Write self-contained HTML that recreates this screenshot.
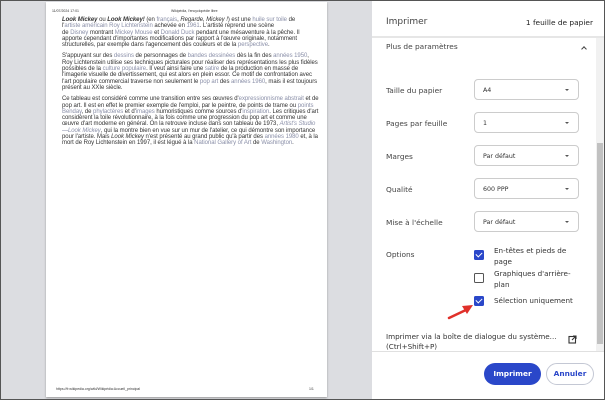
<!DOCTYPE html>
<html><head><meta charset="utf-8"><style>
*{margin:0;padding:0;box-sizing:border-box}
body{width:605px;height:400px;overflow:hidden;font-family:"Liberation Sans",sans-serif;position:relative;background:#fff}
.frame{position:absolute;inset:0;border:1px solid #555;pointer-events:none;z-index:9}
.left{position:absolute;left:0;top:0;width:372px;height:400px;background:#dcdde1}
.page{position:absolute;left:46px;top:2px;width:281px;height:395px;background:#fff;box-shadow:0 1px 2px #999;overflow:hidden}
.hd{position:absolute;top:7px;font-size:3.5px;color:#333}
.txt{position:absolute;left:16px;top:15px;white-space:nowrap;font-size:6px;line-height:6.3px;color:#333;letter-spacing:-0.05px}
.txt p{margin-bottom:5px}
.txt a{color:#8a8fa8}
.right{position:absolute;left:372px;top:0;width:233px;height:400px;background:#fff;font-family:"DejaVu Sans",sans-serif;color:#333}
.lab{position:absolute;left:14px;font-size:7.4px;color:#444}
.sel{position:absolute;left:102px;width:105px;height:21px;border:1px solid #ccc;border-radius:4px;font-size:6.3px;padding:7px 0 0 8px;color:#333}
.sel:after{content:"";position:absolute;right:9px;top:9px;border:2px solid transparent;border-top:2.5px solid #555}
.cb{position:absolute;left:102px;width:10px;height:10px;border-radius:1.5px}
.on{background:#2a47c9}
.on:after{content:"";position:absolute;left:3px;top:1px;width:3px;height:5px;border:solid #fff;border-width:0 1.2px 1.2px 0;transform:rotate(45deg)}
.off{border:1.5px solid #555}
.ot{position:absolute;left:122px;font-size:7.2px;line-height:11px;color:#333}
</style></head><body>
<div class="left">
<div class="page">
<div class="hd" style="left:6px">11/07/2024 17:01</div>
<div class="hd" style="left:125px">Wikipédia, l'encyclopédie libre</div>
<div class="txt">
<p><b><i>Look Mickey</i></b> ou <b><i>Look Mickey!</i></b> (en <a>français</a>, <i>Regarde, Mickey !</i>) est une <a>huile sur toile</a> de<br>l'<a>artiste américain Roy Lichtenstein</a> achevée en <a>1961</a>. L'artiste reprend une scène<br>de <a>Disney</a> montrant <a>Mickey Mouse</a> et <a>Donald Duck</a> pendant une mésaventure à la pêche. Il<br>apporte cependant d'importantes modifications par rapport à l'œuvre originale, notamment<br>structurelles, par exemple dans l'agencement des couleurs et de la <a>perspective</a>.</p>
<p>S'appuyant sur des <a>dessins</a> de personnages de <a>bandes dessinées</a> dès la fin des <a>années 1950</a>,<br>Roy Lichtenstein utilise ses techniques picturales pour réaliser des représentations les plus fidèles<br>possibles de la <a>culture populaire</a>. Il veut ainsi faire une <a>satire</a> de la production en masse de<br>l'imagerie visuelle de divertissement, qui est alors en plein essor. Ce motif de confrontation avec<br>l'art populaire commercial traverse non seulement le <a>pop art</a> des <a>années 1960</a>, mais il est toujours<br>présent au XXIe siècle.</p>
<p>Ce tableau est considéré comme une transition entre ses œuvres d'<a>expressionnisme abstrait</a> et de<br>pop art. Il est en effet le premier exemple de l'emploi, par le peintre, de points de trame ou <a>points</a><br><a>Benday</a>, de <a>phylactères</a> et d'<a>images</a> humoristiques comme sources d'<a>inspiration</a>. Les critiques d'art<br>considèrent la toile révolutionnaire, à la fois comme une progression du pop art et comme une<br>œuvre d'art moderne en général. On la retrouve incluse dans son tableau de 1973, <a><i>Artist's Studio</i></a><br><a><i>—Look Mickey</i></a>, qui la montre bien en vue sur un mur de l'atelier, ce qui démontre son importance<br>pour l'artiste. Mais <i>Look Mickey</i> n'est présenté au grand public qu'à partir des <a>années 1980</a> et, à la<br>mort de Roy Lichtenstein en 1997, il est légué à la <a>National Gallery of Art</a> de <a>Washington</a>.</p>
</div>
<div class="hd" style="left:10px;top:385px">https://fr.wikipedia.org/wiki/Wikipédia:Accueil_principal</div>
<div class="hd" style="left:263px;top:385px">1/1</div>
</div>
</div>
<div class="right">
<div style="position:absolute;left:14px;top:17px;font-size:9px;color:#444">Imprimer</div>
<div style="position:absolute;right:12px;top:18px;font-size:7.4px;color:#222">1 feuille de papier</div>
<div style="position:absolute;left:0;top:36px;width:233px;height:2px;background:#e6e6e6"></div>
<div class="lab" style="top:42px">Plus de paramètres</div>
<div style="position:absolute;left:210px;top:47px;width:4px;height:4px;border-left:1.3px solid #444;border-top:1.3px solid #444;transform:rotate(45deg)"></div>
<div class="lab" style="top:86px">Taille du papier</div><div class="sel" style="top:79px">A4</div>
<div class="lab" style="top:119px">Pages par feuille</div><div class="sel" style="top:112px">1</div>
<div class="lab" style="top:152px">Marges</div><div class="sel" style="top:145px">Par défaut</div>
<div class="lab" style="top:185px">Qualité</div><div class="sel" style="top:178px">600 PPP</div>
<div class="lab" style="top:218px">Mise à l'échelle</div><div class="sel" style="top:211px">Par défaut</div>
<div class="lab" style="top:250px">Options</div>
<div class="cb on" style="top:250px"></div><div class="ot" style="top:245px">En-têtes et pieds de<br>page</div>
<div class="cb off" style="top:273px"></div><div class="ot" style="top:268px">Graphiques d'arrière-<br>plan</div>
<div class="cb on" style="top:296px"></div><div class="ot" style="top:295px">Sélection uniquement</div>
<svg style="position:absolute;left:74px;top:302px" width="40" height="20"><path d="M3 16 L22 7" stroke="#e0302a" stroke-width="2.5" stroke-linecap="round"/><path d="M27 3 L16 4 L21 12 Z" fill="#e0302a"/></svg>
<div style="position:absolute;left:14px;top:332px;font-size:7.2px;line-height:10px;color:#333">Imprimer via la boîte de dialogue du système...<br>(Ctrl+Shift+P)</div>
<svg style="position:absolute;left:196px;top:335px" width="9" height="9"><rect x="1" y="1.5" width="6.5" height="6.5" fill="none" stroke="#333" stroke-width="1.1"/><path d="M4 5 L8 1 M5 1 H8 V4" stroke="#333" stroke-width="1.1" fill="none"/></svg>
<div style="position:absolute;left:224px;top:38px;width:8px;height:313px;background:#f1f1f1"></div>
<div style="position:absolute;left:225px;top:143px;width:6px;height:201px;background:#c1c1c1"></div>
<div style="position:absolute;left:0;top:351px;width:233px;height:1px;background:#e0e0e0"></div>
<div style="position:absolute;left:112px;top:363px;width:57px;height:22px;border-radius:11px;background:#2a47c9;color:#fff;font-size:7.4px;font-weight:bold;text-align:center;line-height:22px">Imprimer</div>
<div style="position:absolute;left:174px;top:363px;width:48px;height:22px;border-radius:11px;border:1px solid #c4c8d4;color:#2a47c9;font-size:7.4px;font-weight:bold;text-align:center;line-height:20px">Annuler</div>
</div>
<div class="frame"></div>
</body></html>
